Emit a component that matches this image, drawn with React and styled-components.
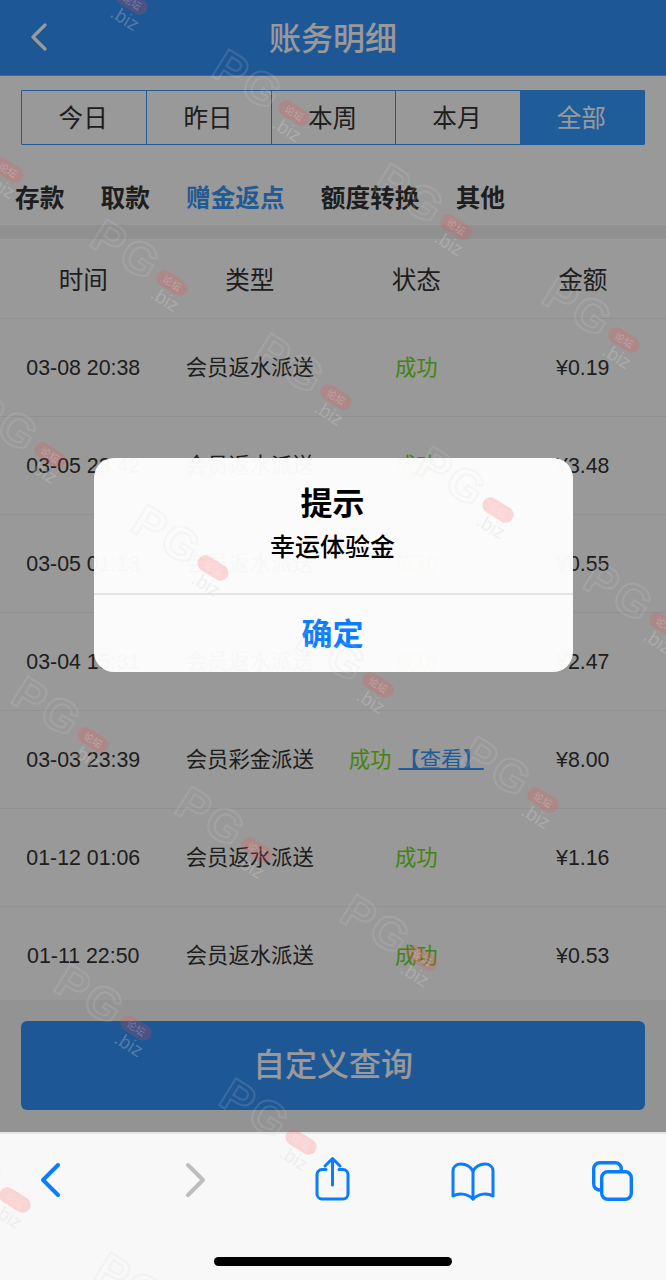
import React from 'react';
import styled, { createGlobalStyle } from 'styled-components';

const Global = createGlobalStyle`
  html, body { margin: 0; padding: 0; background: #f8f8f8; }
  * { box-sizing: border-box; }
  body { font-family: "Liberation Sans", "Noto Sans CJK SC", sans-serif; }
`;

const Screen = styled.div`
  position: relative;
  width: 666px;
  height: 1280px;
  overflow: hidden;
  display: flex;
  flex-direction: column;
`;
const AppArea = styled.div`
  position: relative;
  height: 1132px;
  background: #f5f5f5;
  display: flex;
  flex-direction: column;
`;
const Header = styled.header`
  height: 76px;
  flex: none;
  background: #3292f8;
  border-bottom: 1px solid #6fb0f5;
  display: flex;
  align-items: center;
  justify-content: center;
  position: relative;
  color: #fff;
  font-size: 32px;
  font-weight: 500;
  font-family: "Noto Sans CJK SC", sans-serif;
  padding-bottom: 4px;
`;
const BackBtn = styled.svg`
  position: absolute;
  left: 30px;
  top: 23px;
`;
const Content = styled.div`
  background: #fff;
  display: flex;
  flex-direction: column;
`;
const Segments = styled.div`
  display: grid;
  grid-template-columns: repeat(5, 1fr);
  margin: 14px 21px 0;
  height: 55px;
  border: 1px solid #3496ff;
  border-radius: 1px;
`;
const Segment = styled.div`
  display: flex;
  align-items: center;
  justify-content: center;
  font-family: "Noto Sans CJK SC", sans-serif;
  font-size: 24.6px;
  color: ${p => (p.$active ? '#fff' : '#333')};
  background: ${p => (p.$active ? '#339cff' : 'transparent')};
  border-left: ${p => (p.$first ? 'none' : '1px solid #3496ff')};
  padding: 0 2px 4px 0;
`;
const Cats = styled.nav`
  height: 80px;
  display: flex;
  align-items: center;
  gap: 36.2px;
  padding: 22px 0 0 15px;
`;
const Cat = styled.span`
  font-family: "Noto Sans CJK SC", sans-serif;
  font-size: 24.66px;
  font-weight: 700;
  color: ${p => (p.$active ? '#3a96f5' : '#333')};
`;
const Band = styled.div`
  height: 14px;
  background: #f0f0f0;
`;
const Row = styled.div`
  display: grid;
  grid-template-columns: repeat(4, 1fr);
  align-items: center;
  height: ${p => (p.$head ? '80px' : '98px')};
  border-bottom: 1px solid #f2f2f2;
  background: #fff;
`;
const HeadCell = styled.div`
  text-align: center;
  font-family: "Noto Sans CJK SC", sans-serif;
  font-size: 24.6px;
  color: #333;
  padding-bottom: 2px;
`;
const Cell = styled.div`
  text-align: center;
  font-family: "Noto Sans CJK SC", sans-serif;
  font-size: 21.33px;
  color: #333;
  white-space: nowrap;
  padding-bottom: 4px;
`;
const NumCell = styled.div`
  text-align: center;
  font-family: "Liberation Sans", sans-serif;
  font-size: 21.33px;
  color: #333;
  white-space: nowrap;
  padding-top: 2px;
`;
const Status = styled(Cell)`
  color: #6fdd20;
`;
const Link = styled.span`
  color: #3499ff;
  margin-left: 7px;
  text-decoration: underline;
  text-decoration-thickness: 2px;
  white-space: pre;
`;
const Footer = styled.div`
  flex: 1;
  padding: 21px 21px 0;
  background: #f5f5f5;
  margin-top: -5px;
  position: relative;
`;
const QueryButton = styled.div`
  height: 89px;
  border-radius: 6px;
  background: #3292f8;
  color: #fff;
  display: flex;
  align-items: center;
  justify-content: center;
  font-family: "Noto Sans CJK SC", sans-serif;
  font-size: 32px;
  font-weight: 500;
  padding-bottom: 8px;
`;
const Scrim = styled.div`
  position: absolute;
  inset: 0;
  background: rgba(0, 0, 0, 0.4);
`;
const Dialog = styled.div`
  position: absolute;
  left: 94px;
  top: 458px;
  width: 479px;
  height: 214px;
  border-radius: 20px;
  background: rgba(254, 254, 254, 0.97);
  display: flex;
  flex-direction: column;
  font-family: "Noto Sans CJK SC", sans-serif;
`;
const DialogBody = styled.div`
  height: 137px;
  border-bottom: 2px solid #e4e4e4;
  display: flex;
  flex-direction: column;
  align-items: center;
  padding: 22px 2px 0 0;
  color: #000;
`;
const DialogTitle = styled.div`
  font-size: 32px;
  font-weight: 700;
  line-height: 44px;
  height: 44px;
  margin-top: -1px;
`;
const DialogText = styled.div`
  font-size: 25px;
  font-weight: 500;
  line-height: 44px;
`;
const DialogAction = styled.div`
  flex: 1;
  display: flex;
  align-items: center;
  justify-content: center;
  color: #0a7cff;
  font-size: 31px;
  font-weight: 700;
  padding: 0 2px 5px 0;
`;
const BrowserBar = styled.div`
  height: 148px;
  flex: none;
  background: #f8f8f8;
  border-top: 2px solid #e6e6e6;
  position: relative;
`;
const BarIcons = styled.div`
  height: 96px;
  position: relative;
`;
const BarIcon = styled.svg`
  position: absolute;
  left: ${p => p.$x}px;
  top: ${p => p.$y}px;
`;
const HomeIndicator = styled.div`
  position: absolute;
  left: 214px;
  top: 123px;
  width: 238px;
  height: 9px;
  border-radius: 5px;
  background: #000;
`;
const Mark = styled.div.attrs(p => ({ style: { left: p.$x, top: p.$y } }))`
  position: absolute;
  width: 0;
  height: 0;
  pointer-events: none;
  transform: rotate(32deg);
  transform-origin: 0 0;
`;
const MarkText = styled.div`
  position: absolute;
  left: -92px;
  top: -30px;
  font-family: "Liberation Sans", sans-serif;
  font-weight: 700;
  font-size: 46px;
  line-height: 52px;
  letter-spacing: 3px;
  white-space: nowrap;
  color: transparent;
  -webkit-text-stroke: 2px rgba(214, 214, 214, 0.18);
`;
const MarkBiz = styled.div`
  position: absolute;
  left: -12px;
  top: 7px;
  font-family: "Liberation Sans", sans-serif;
  font-size: 19px;
  line-height: 22px;
  white-space: nowrap;
  color: rgba(214, 214, 214, 0.3);
`;
const MarkPill = styled.div`
  position: absolute;
  left: -17px;
  top: -8px;
  width: 34px;
  height: 16px;
  border-radius: 8px;
  background: rgba(255, 70, 70, 0.2);
  display: flex;
  align-items: center;
  justify-content: center;
  font-family: "Noto Sans CJK SC", sans-serif;
  font-size: 10px;
  line-height: 16px;
  white-space: nowrap;
  color: rgba(255, 255, 255, 0.25);
`;

function Watermark({ x, y }) {
  return (
    <Mark $x={x} $y={y}>
      <MarkText>PG</MarkText>
      <MarkBiz>.biz</MarkBiz>
      <MarkPill>论坛</MarkPill>
    </Mark>
  );
}

const marks = [
  [132, 2], [294, 113], [456, 227], [624, 340],
  [8, 170], [172, 283], [336, 397], [498, 510], [665, 625],
  [50, 455], [213, 568], [378, 685], [543, 800],
  [93, 740], [257, 850], [422, 958],
  [136, 1028], [301, 1142],
  [15, 1200], [176, 1316],
];

const rows = [
  ['03-08 20:38', '会员返水派送', '¥0.19'],
  ['03-05 23:42', '会员返水派送', '¥3.48'],
  ['03-05 01:13', '会员返水派送', '¥0.55'],
  ['03-04 15:31', '会员返水派送', '¥2.47'],
  ['03-03 23:39', '会员彩金派送', '¥8.00', true],
  ['01-12 01:06', '会员返水派送', '¥1.16'],
  ['01-11 22:50', '会员返水派送', '¥0.53'],
];

export default function App() {
  return (
    <Screen>
      <Global />
      <AppArea>
        <Header>
          <BackBtn width="20" height="28" viewBox="0 0 20 28" fill="none" stroke="#fff" strokeWidth="3.2" strokeLinecap="round" strokeLinejoin="round">
            <polyline points="15,2 3,14 15,26" />
          </BackBtn>
          账务明细
        </Header>
        <Content>
          <Segments>
            <Segment $first>今日</Segment>
            <Segment>昨日</Segment>
            <Segment>本周</Segment>
            <Segment>本月</Segment>
            <Segment $active>全部</Segment>
          </Segments>
          <Cats>
            <Cat>存款</Cat>
            <Cat>取款</Cat>
            <Cat $active>赠金返点</Cat>
            <Cat>额度转换</Cat>
            <Cat>其他</Cat>
          </Cats>
          <Band />
          <Row $head>
            <HeadCell>时间</HeadCell>
            <HeadCell>类型</HeadCell>
            <HeadCell>状态</HeadCell>
            <HeadCell>金额</HeadCell>
          </Row>
          {rows.map(r => (
            <Row key={r[0]}>
              <NumCell>{r[0]}</NumCell>
              <Cell>{r[1]}</Cell>
              <Status>
                成功{r[3] && <Link>【查看】</Link>}
              </Status>
              <NumCell>{r[2]}</NumCell>
            </Row>
          ))}
        </Content>
        <Footer>
          <QueryButton>自定义查询</QueryButton>
        </Footer>
        <Scrim />
        <Dialog>
          <DialogBody>
            <DialogTitle>提示</DialogTitle>
            <DialogText>幸运体验金</DialogText>
          </DialogBody>
          <DialogAction>确定</DialogAction>
        </Dialog>
      </AppArea>
      <BrowserBar>
        <BarIcons>
          <BarIcon $x={38} $y={27} width="26" height="38" viewBox="0 0 26 38" fill="none" stroke="#0a7cff" strokeWidth="4" strokeLinecap="round" strokeLinejoin="round">
            <polyline points="20,4 5,19 20,34" />
          </BarIcon>
          <BarIcon $x={183} $y={27} width="26" height="38" viewBox="0 0 26 38" fill="none" stroke="#bdbdbd" strokeWidth="4" strokeLinecap="round" strokeLinejoin="round">
            <polyline points="5,4 20,19 5,34" />
          </BarIcon>
          <BarIcon $x={314} $y={22} width="40" height="46" viewBox="0 0 40 46" fill="none" stroke="#0a7cff" strokeWidth="3" strokeLinecap="round" strokeLinejoin="round">
            <path d="M12 13.5H8a5 5 0 0 0-5 5V38a5 5 0 0 0 5 5h21a5 5 0 0 0 5-5V18.5a5 5 0 0 0-5-5h-4" />
            <path d="M18.5 29V3M11 10l7.5-7.5L26 10" />
          </BarIcon>
          <BarIcon $x={450} $y={28} width="46" height="40" viewBox="0 0 46 40" fill="none" stroke="#0a7cff" strokeWidth="3" strokeLinecap="round" strokeLinejoin="round">
            <path d="M23 9C20 4 16 2 11 2 6 2 3 5 3 9v25c5-3 14-3 20 3 6-6 15-6 20-3V9c0-4-3-7-8-7-5 0-9 2-12 7Z" />
            <path d="M23 9v28" />
          </BarIcon>
          <BarIcon $x={590} $y={27} width="44" height="42" viewBox="0 0 44 42" fill="none" stroke="#0a7cff" strokeWidth="3.4" strokeLinejoin="round">
            <rect x="11.7" y="10.7" width="29.6" height="27.6" rx="6" />
            <path d="M11.7 29H9.7a6 6 0 0 1-6-6V7.7a6 6 0 0 1 6-6h15.6a6 6 0 0 1 6 6v3" />
          </BarIcon>
        </BarIcons>
        <HomeIndicator />
      </BrowserBar>
      {marks.map(([x, y]) => <Watermark key={`${x}-${y}`} x={x} y={y} />)}
    </Screen>
  );
}
